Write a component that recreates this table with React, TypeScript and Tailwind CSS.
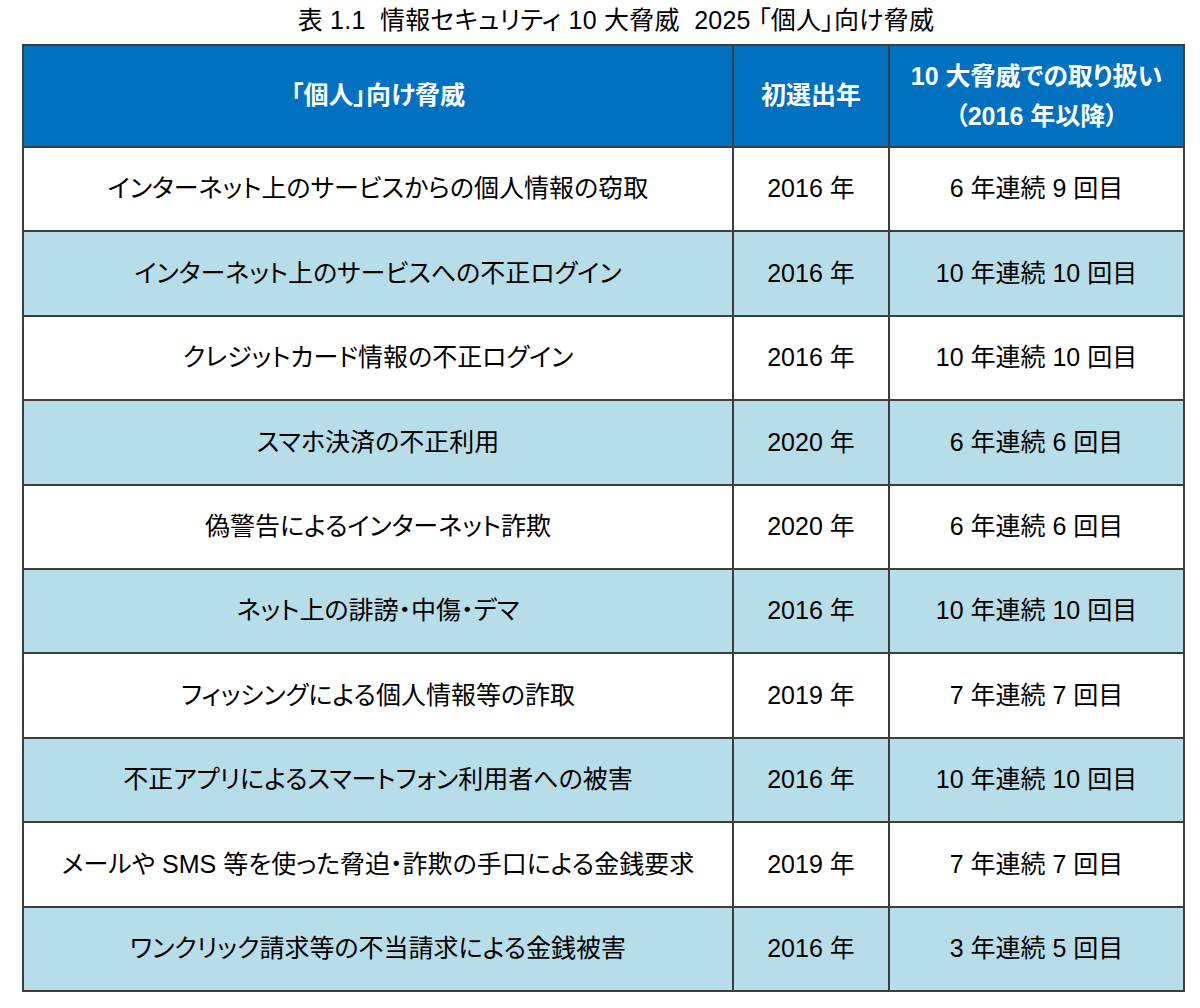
const rows: [string, string, string][] = [
  ['インターネット上のサービスからの個人情報の窃取', '2016 年', '6 年連続 9 回目'],
  ['インターネット上のサービスへの不正ログイン', '2016 年', '10 年連続 10 回目'],
  ['クレジットカード情報の不正ログイン', '2016 年', '10 年連続 10 回目'],
  ['スマホ決済の不正利用', '2020 年', '6 年連続 6 回目'],
  ['偽警告によるインターネット詐欺', '2020 年', '6 年連続 6 回目'],
  ['ネット上の誹謗・中傷・デマ', '2016 年', '10 年連続 10 回目'],
  ['フィッシングによる個人情報等の詐取', '2019 年', '7 年連続 7 回目'],
  ['不正アプリによるスマートフォン利用者への被害', '2016 年', '10 年連続 10 回目'],
  ['メールや SMS 等を使った脅迫・詐欺の手口による金銭要求', '2019 年', '7 年連続 7 回目'],
  ['ワンクリック請求等の不当請求による金銭被害', '2016 年', '3 年連続 5 回目'],
];

export default function App() {
  return (
    <div
      className="w-[1200px] h-[1008px] bg-white text-black [font-feature-settings:'palt']"
      style={{ fontFamily: '"Liberation Sans", "Noto Sans CJK JP", sans-serif' }}
    >
      <div className="h-[44px] flex items-center justify-center pl-[32px] pb-[2px] text-[25px] font-normal tracking-[0.01em]">
        表 1.1&nbsp; 情報セキュリティ 10 大脅威&nbsp; 2025 「個人」向け脅威
      </div>
      <table className="ml-[22px] w-[1161px] border-collapse table-fixed">
        <colgroup>
          <col className="w-[710px]" />
          <col className="w-[156px]" />
          <col className="w-[295px]" />
        </colgroup>
        <thead>
          <tr className="h-[102px] bg-[#0070c0] text-white text-[25px] font-bold">
            <th className="border-2 border-[#3d3d3d] text-center">「個人」向け脅威</th>
            <th className="border-2 border-[#3d3d3d] text-center">初選出年</th>
            <th className="border-2 border-[#3d3d3d] text-center leading-[40px]">
              10 大脅威での取り扱い
              <br />
              （2016 年以降）
            </th>
          </tr>
        </thead>
        <tbody>
          {rows.map(([threat, year, count], i) => (
            <tr
              key={threat}
              className={`h-[84.4px] text-[25px] font-normal ${i % 2 === 1 ? 'bg-[#b7dde8]' : 'bg-white'}`}
            >
              <td className="border-2 border-[#3d3d3d] text-center">{threat}</td>
              <td className="border-2 border-[#3d3d3d] text-center">{year}</td>
              <td className="border-2 border-[#3d3d3d] text-center">{count}</td>
            </tr>
          ))}
        </tbody>
      </table>
    </div>
  );
}
